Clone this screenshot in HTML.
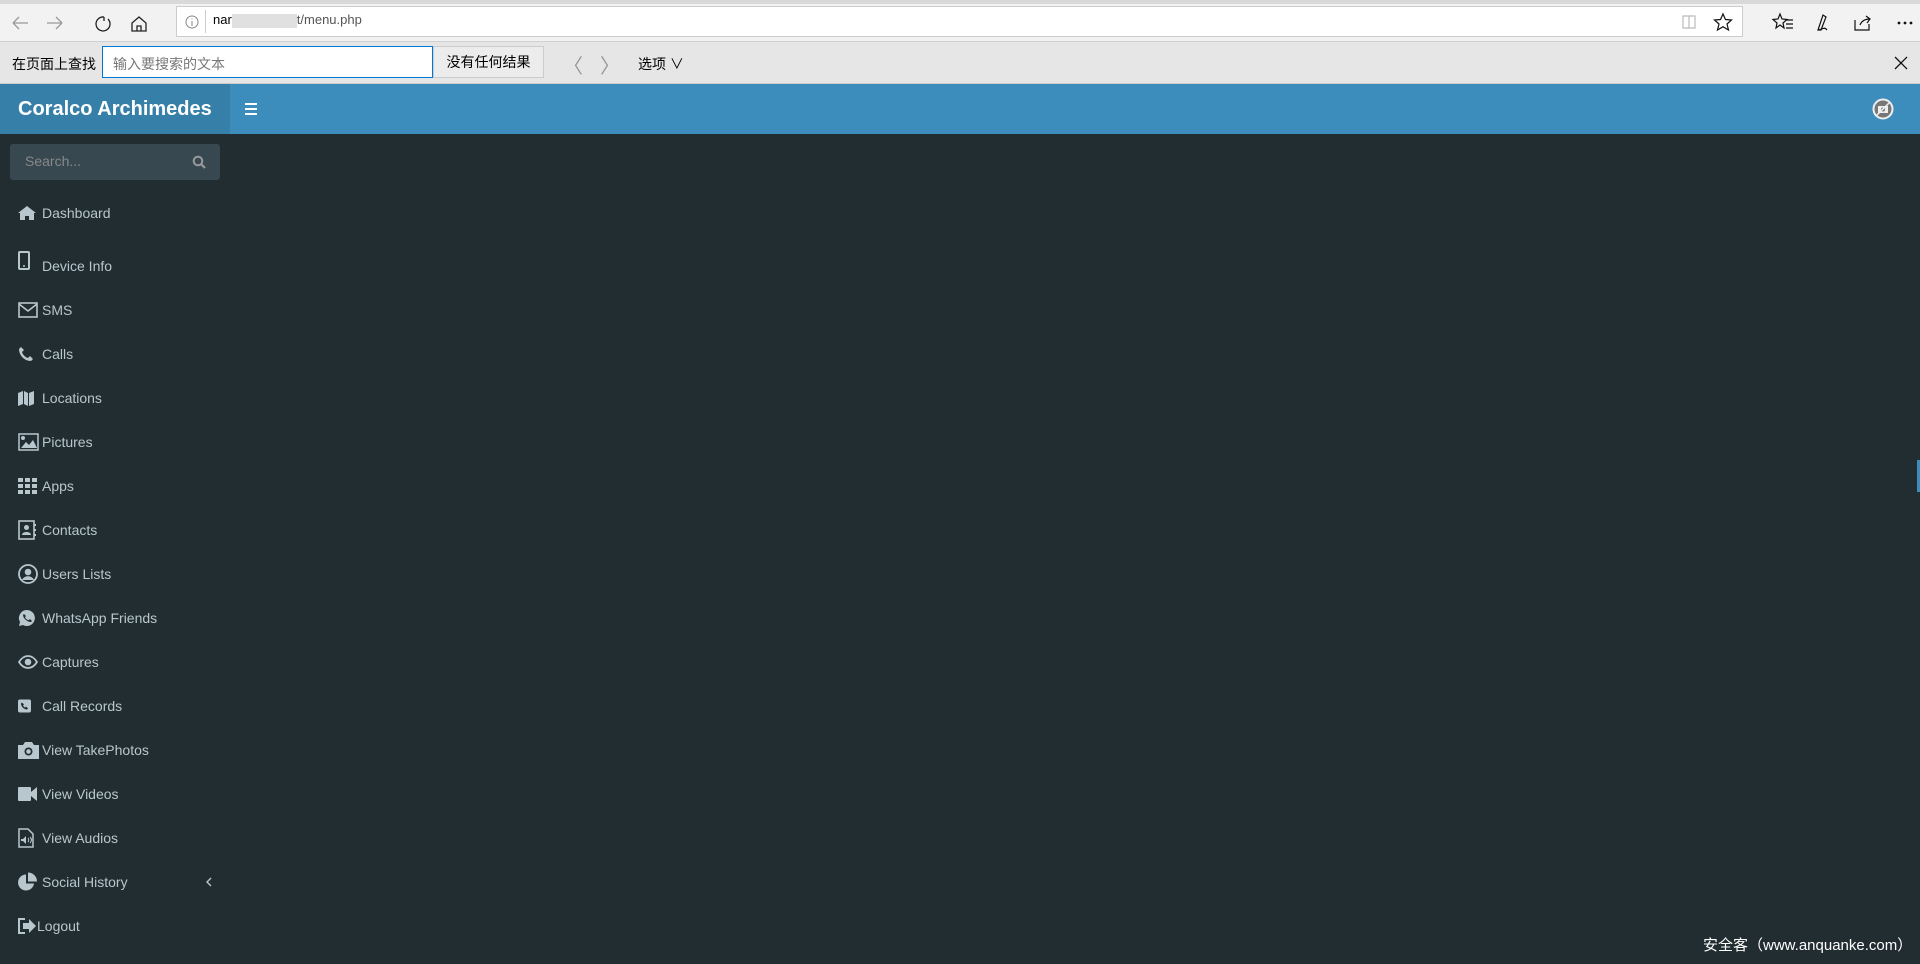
<!DOCTYPE html>
<html><head><meta charset="utf-8"><style>
*{margin:0;padding:0;box-sizing:border-box}
body{width:1920px;height:964px;overflow:hidden;background:#222d32;font-family:"Liberation Sans","Noto Sans CJK SC",sans-serif;position:relative}
.abs{position:absolute}
.tabs{left:0;top:0;width:1920px;height:4px;background:#d9d9d9}
.tb{left:0;top:4px;width:1920px;height:38px;background:#f2f2f2;border-bottom:1px solid #d0d0d0}
.addr{left:176px;top:6px;width:1567px;height:31px;background:#fff;border:1px solid #ccc}
.find{left:0;top:42px;width:1920px;height:42px;background:#e6e6e6;border-bottom:1px solid #ccc;font-size:14px;color:#000}
.hdr{left:0;top:84px;width:1920px;height:50px;background:#3c8dbc}
.brand{left:0;top:84px;width:230px;height:50px;background:#367fa9;color:#fff;font-weight:bold;font-size:20px;line-height:50px;padding-left:18px}
.menu .it{position:absolute;left:0;width:230px;height:44px;color:#b8c7ce;font-size:14px}
.menu .it span{position:absolute;left:42px;top:50%;transform:translateY(-50%)}
.menu .it svg{position:absolute;left:18px;top:50%;transform:translateY(-50%)}
</style></head><body>
<div class="abs tabs"></div>
<div class="abs tb"></div>
<svg class="abs" style="left:10px;top:13px" width="140" height="20" viewBox="0 0 140 20" fill="none" stroke-width="1.3">
<path d="M3 10h15M3 10l6-6M3 10l6 6" stroke="#999"/>
<path d="M52 10h-15M52 10l-6-6M52 10l-6 6" stroke="#999"/>
<path d="M94 4a7 7 0 1 0 4 2M94 4v4" stroke="#222"/>
<path d="M129 4l-7 6v8h14v-8zM127 18v-5h4v5" stroke="#222"/>
</svg>
<div class="abs addr"></div>
<svg class="abs" style="left:185px;top:15px" width="14" height="14"><circle cx="7" cy="7" r="6" fill="none" stroke="#888"/><path d="M7 6v5M7 3.5v1" stroke="#888"/></svg>
<div class="abs" style="left:205px;top:10px;width:1px;height:23px;background:#ccc"></div>
<div class="abs" style="left:213px;top:12px;font-size:13px;color:#000">nar<span style="display:inline-block;width:65px;height:14px;background:#e0e0e0;vertical-align:middle"></span><span style="color:#555">t/menu.php</span></div>
<svg class="abs" style="left:1680px;top:12px" width="240" height="20" fill="none" stroke="#111" stroke-width="1.2">
<path d="M3 4h6v12h-6zM9 4h6v12h-6z" stroke="#bbb"/>
<path d="M43 2l2.5 5.5 6 .5-4.5 4 1.5 6-5.5-3.3-5.5 3.3 1.5-6-4.5-4 6-.5z"/>
<path d="M100 2l2 5 5 .5-4 3.5 1 5-4-3-4 3 1-5-4-3.5 5-.5zM106 8h7M106 12h7M106 16h7"/>
<path d="M138 18l5-15 3 2-5 13zM138 18c4 0 6-4 9 0"/>
<path d="M175 8v10h14v-6M180 13c2-5 6-6 10-6M186 4l4 3-3 4"/>
<circle cx="219" cy="11" r=".8" fill="#111"/><circle cx="225" cy="11" r=".8" fill="#111"/><circle cx="231" cy="11" r=".8" fill="#111"/>
</svg>
<div class="abs find">
<div class="abs" style="left:12px;top:12px">在页面上查找</div>
<div class="abs" style="left:102px;top:4px;width:331px;height:32px;background:#fff;border:1px solid #0078d7;font-size:14px;color:#777;padding:7px 0 0 10px">输入要搜索的文本</div>
<div class="abs" style="left:433px;top:4px;width:111px;height:32px;background:#ececec;border:1px solid #ccc;text-align:center;line-height:30px">没有任何结果</div>
<div class="abs" style="left:563px;top:8px;font-size:20px;color:#999">〈</div>
<div class="abs" style="left:600px;top:8px;font-size:20px;color:#999">〉</div>
<div class="abs" style="left:638px;top:12px">选项 ∨</div>
<svg class="abs" style="left:1893px;top:13px" width="16" height="16"><path d="M2 2l12 12M14 2l-12 12" stroke="#111" stroke-width="1.3"/></svg>
</div>
<div class="abs hdr"></div>
<div class="abs brand">Coralco Archimedes</div>
<svg class="abs" style="left:245px;top:102px" width="12" height="14"><path d="M0 2h12M0 7h12M0 12h12" stroke="#fff" stroke-width="2"/></svg>
<svg class="abs" style="left:1872px;top:98px" width="22" height="22"><circle cx="11" cy="11" r="9.5" fill="#777" stroke="#eee" stroke-width="2"/><rect x="6" y="8" width="10" height="7" fill="#eee"/><circle cx="11" cy="11.5" r="2" fill="#777"/><path d="M5 17L17 5" stroke="#eee" stroke-width="1.5"/></svg>
<div class="abs" style="left:10px;top:144px;width:210px;height:36px;background:#374850;border-radius:3px;color:#888;font-size:14px;padding:9px 0 0 15px">Search...</div>
<svg class="abs" style="left:192px;top:155px" width="14" height="14"><circle cx="6" cy="6" r="4.3" fill="none" stroke="#999" stroke-width="2"/><path d="M9 9l4 4" stroke="#999" stroke-width="2.2"/></svg>
<div class="menu">
<div class="it" style="top:191px"><svg width="18" height="14" viewBox="0 0 18 14" fill="#b8c7ce"><path d="M9 0L0 7h2v7h5v-4h4v4h5V7h2z"/></svg><span>Dashboard</span></div>
<div class="it" style="top:244px"><svg width="12" height="20" style="top:38%"><rect x="1" y="1" width="10" height="17" rx="1" fill="none" stroke="#b8c7ce" stroke-width="2"/><circle cx="6" cy="15" r="1" fill="#b8c7ce"/></svg><span>Device Info</span></div>
<div class="it" style="top:288px"><svg width="20" height="16"><rect x="1" y="1" width="18" height="14" fill="none" stroke="#b8c7ce" stroke-width="1.6"/><path d="M1 2l9 7 9-7" fill="none" stroke="#b8c7ce" stroke-width="1.6"/></svg><span>SMS</span></div>
<div class="it" style="top:332px"><svg width="16" height="16" viewBox="0 0 16 16"><path d="M3 1l3 3-2 2c1 3 3 5 6 6l2-2 3 3-2 2C6 15 1 9 1 3z" fill="#b8c7ce"/></svg><span>Calls</span></div>
<div class="it" style="top:376px"><svg width="16" height="16" viewBox="0 0 16 16" fill="#b8c7ce"><path d="M0 3l5-2v13l-5 2zM6 1l4 2v13l-4-2zM11 3l5-2v13l-5 2z"/></svg><span>Locations</span></div>
<div class="it" style="top:420px"><svg width="21" height="18"><rect x="1" y="1" width="19" height="16" fill="none" stroke="#b8c7ce" stroke-width="1.5"/><circle cx="5" cy="5" r="2" fill="#b8c7ce"/><path d="M3 15l5-6 3 3 4-5 4 8z" fill="#b8c7ce"/></svg><span>Pictures</span></div>
<div class="it" style="top:464px"><svg width="20" height="16" fill="#b8c7ce"><rect x="0" y="0" width="5" height="4"/><rect x="7" y="0" width="5" height="4"/><rect x="14" y="0" width="5" height="4"/><rect x="0" y="6" width="5" height="4"/><rect x="7" y="6" width="5" height="4"/><rect x="14" y="6" width="5" height="4"/><rect x="0" y="12" width="5" height="4"/><rect x="7" y="12" width="5" height="4"/><rect x="14" y="12" width="5" height="4"/></svg><span>Apps</span></div>
<div class="it" style="top:508px"><svg width="18" height="20"><rect x="1" y="1" width="15" height="18" fill="none" stroke="#b8c7ce" stroke-width="1.6"/><circle cx="8.5" cy="7.5" r="2.5" fill="#b8c7ce"/><path d="M4 15c0-4 9-4 9 0z" fill="#b8c7ce"/><path d="M17 4v2M17 9v2M17 14v2" stroke="#b8c7ce" stroke-width="2"/></svg><span>Contacts</span></div>
<div class="it" style="top:552px"><svg width="20" height="20"><circle cx="10" cy="10" r="9" fill="none" stroke="#b8c7ce" stroke-width="1.8"/><circle cx="10" cy="8" r="3.3" fill="#b8c7ce"/><path d="M4 16c2-5 10-5 12 0" fill="#b8c7ce"/></svg><span>Users Lists</span></div>
<div class="it" style="top:596px"><svg width="18" height="18"><path d="M9 1a8 8 0 1 1-4 15L1 17l1-4A8 8 0 0 1 9 1z" fill="#b8c7ce"/><path d="M6 5l2 2-1 1c1 2 2 3 4 3l1-1 2 2-1 1c-4 0-8-4-8-7z" fill="#222d32"/></svg><span>WhatsApp Friends</span></div>
<div class="it" style="top:640px"><svg width="20" height="14"><path d="M1 7c5-8 13-8 18 0-5 8-13 8-18 0z" fill="none" stroke="#b8c7ce" stroke-width="1.8"/><circle cx="10" cy="7" r="3.3" fill="#b8c7ce"/></svg><span>Captures</span></div>
<div class="it" style="top:684px"><svg width="13" height="13"><rect width="13" height="13" rx="2" fill="#b8c7ce"/><path d="M4 3l2 2-1 1c1 1 1 2 2 2l1-1 2 2-1 1c-3 0-6-3-6-6z" fill="#222d32"/></svg><span>Call Records</span></div>
<div class="it" style="top:728px"><svg width="21" height="18"><path d="M0 4h5l2-3h7l2 3h5v14H0z" fill="#b8c7ce"/><circle cx="10.5" cy="10.5" r="4" fill="#222d32"/><circle cx="10.5" cy="10.5" r="2.3" fill="#b8c7ce"/></svg><span>View TakePhotos</span></div>
<div class="it" style="top:772px"><svg width="20" height="14" fill="#b8c7ce"><rect x="0" y="0" width="13" height="14" rx="1"/><path d="M13 5l6-5v14l-6-5z"/></svg><span>View Videos</span></div>
<div class="it" style="top:816px"><svg width="16" height="20"><path d="M1 1h9l5 5v13H1z" fill="none" stroke="#b8c7ce" stroke-width="1.5"/><path d="M3 11h2l3-3v8l-3-3H3z" fill="#b8c7ce"/><path d="M10 10c1 1 1 3 0 4M12 9c2 2 2 4 0 6" stroke="#b8c7ce" fill="none"/></svg><span>View Audios</span></div>
<div class="it" style="top:860px"><svg width="19" height="19"><path d="M8 2a8 8 0 1 0 8 9H8z" fill="#b8c7ce"/><path d="M10 0v9h9a9 9 0 0 0-9-9z" fill="#b8c7ce"/></svg><span>Social History</span><svg width="8" height="10" style="left:205px"><path d="M6 1L2 5l4 4" fill="none" stroke="#b8c7ce" stroke-width="1.4"/></svg></div>
<div class="it" style="top:904px"><svg width="18" height="16" style="left:18px"><path d="M7 1H1v14h6" fill="none" stroke="#b8c7ce" stroke-width="2"/><path d="M5 5h6V1l7 7-7 7v-4H5z" fill="#b8c7ce"/></svg><span style="left:37px">Logout</span></div>
</div>
<div class="abs" style="left:1917px;top:460px;width:3px;height:32px;background:#3c8dbc"></div>
<div class="abs" style="left:1703px;top:934px;font-size:15px;color:#fff;white-space:nowrap">安全客（www.anquanke.com）</div>
</body></html>
